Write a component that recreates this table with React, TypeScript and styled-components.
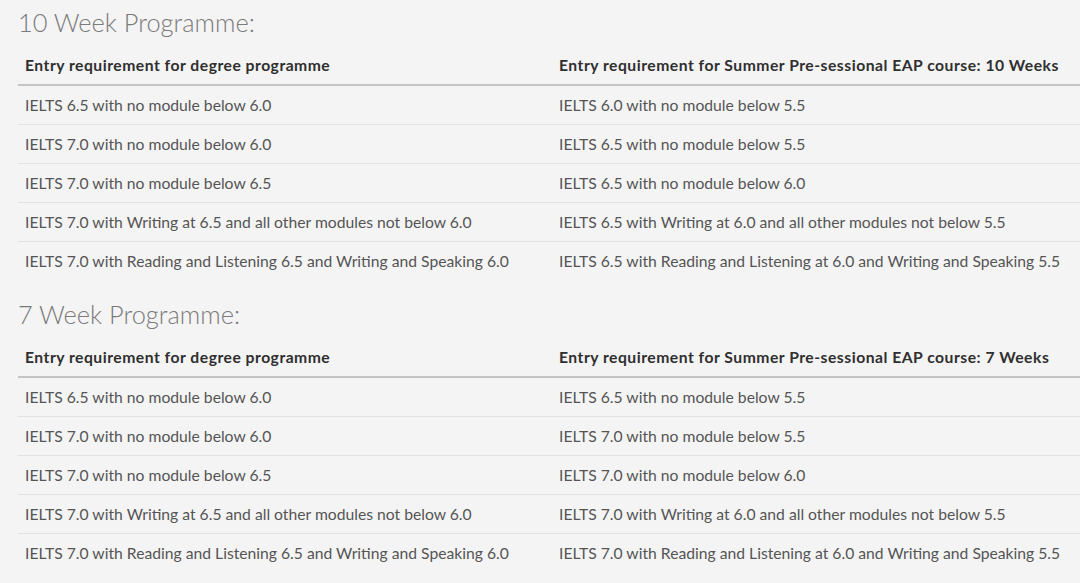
import React from "react";
import styled, { createGlobalStyle } from "styled-components";

const Global = createGlobalStyle`
  html, body { margin: 0; padding: 0; background: #f4f4f4; }
  body { font-family: "Lato", "Liberation Sans", sans-serif; overflow: hidden; }
`;

const Page = styled.div`
  width: 1080px;
  height: 583px;
  padding: 4px 0 0 18px;
  box-sizing: border-box;
  overflow: hidden;
`;

const Heading = styled.h2`
  margin: 0 0 15px 0;
  font-weight: 300;
  font-size: 25.4px;
  line-height: 36px;
  color: #7a7a7a;
`;

const Table = styled.div`
  display: grid;
  grid-template-columns: 534px 1fr;
  width: 1062px;
  margin-bottom: 15px;
`;

const HeadCell = styled.div`
  padding: 0 7px 9px 7px;
  font-weight: 700;
  font-size: 15.7px;
  letter-spacing: 0.5px;
  line-height: 20px;
  color: #2f2f2f;
  border-bottom: 2px solid #c4c4c4;
  white-space: nowrap;
`;

const Cell = styled.div<{ $last?: boolean }>`
  padding: 0 7px;
  height: 39px;
  display: flex;
  align-items: center;
  font-size: 15.7px;
  color: #555;
  white-space: nowrap;
  border-bottom: 1px solid ${(p) => (p.$last ? "transparent" : "#e2e2e2")};
  box-sizing: border-box;
`;

type Section = { title: string; weeks: string; rows: [string, string][] };

const sections: Section[] = [
  {
    title: "10 Week Programme:",
    weeks: "10 Weeks",
    rows: [
      ["IELTS 6.5 with no module below 6.0", "IELTS 6.0 with no module below 5.5"],
      ["IELTS 7.0 with no module below 6.0", "IELTS 6.5 with no module below 5.5"],
      ["IELTS 7.0 with no module below 6.5", "IELTS 6.5 with no module below 6.0"],
      [
        "IELTS 7.0 with Writing at 6.5 and all other modules not below 6.0",
        "IELTS 6.5 with Writing at 6.0 and all other modules not below 5.5",
      ],
      [
        "IELTS 7.0 with Reading and Listening 6.5 and Writing and Speaking 6.0",
        "IELTS 6.5 with Reading and Listening at 6.0 and Writing and Speaking 5.5",
      ],
    ],
  },
  {
    title: "7 Week Programme:",
    weeks: "7 Weeks",
    rows: [
      ["IELTS 6.5 with no module below 6.0", "IELTS 6.5 with no module below 5.5"],
      ["IELTS 7.0 with no module below 6.0", "IELTS 7.0 with no module below 5.5"],
      ["IELTS 7.0 with no module below 6.5", "IELTS 7.0 with no module below 6.0"],
      [
        "IELTS 7.0 with Writing at 6.5 and all other modules not below 6.0",
        "IELTS 7.0 with Writing at 6.0 and all other modules not below 5.5",
      ],
      [
        "IELTS 7.0 with Reading and Listening 6.5 and Writing and Speaking 6.0",
        "IELTS 7.0 with Reading and Listening at 6.0 and Writing and Speaking 5.5",
      ],
    ],
  },
];

export default function App() {
  return (
    <Page>
      <Global />
      {sections.map((s) => (
        <React.Fragment key={s.title}>
          <Heading>{s.title}</Heading>
          <Table>
            <HeadCell>Entry requirement for degree programme</HeadCell>
            <HeadCell>Entry requirement for Summer Pre-sessional EAP course: {s.weeks}</HeadCell>
            {s.rows.map((r, i) => (
              <React.Fragment key={i}>
                <Cell $last={i === s.rows.length - 1}>{r[0]}</Cell>
                <Cell $last={i === s.rows.length - 1}>{r[1]}</Cell>
              </React.Fragment>
            ))}
          </Table>
        </React.Fragment>
      ))}
    </Page>
  );
}
